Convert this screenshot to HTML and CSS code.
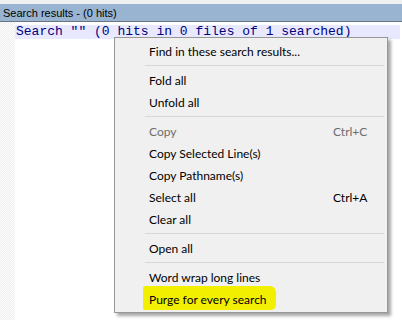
FILE: index.html
```html
<!DOCTYPE html>
<html lang="en">
<head>
    <meta charset="UTF-8">
    <title>Search results</title>
    <link rel="stylesheet" href="styles.css">
</head>
<body>

    <div class="window">
        <!-- Panel caption -->
        <div class="caption-strip"></div>
        <div class="caption">Search results - (0 hits)</div>

        <!-- Results editor -->
        <div class="editor">
            <div class="gutter"></div>
            <div class="content">
                <div class="result-line">Search "" (0 hits in 0 files of 1 searched)</div>
            </div>
        </div>

        <!-- Context menu -->
        <div class="context-menu">
            <div class="item"><span class="label">Find in these search results...</span></div>
            <div class="separator"></div>
            <div class="item"><span class="label">Fold all</span></div>
            <div class="item"><span class="label">Unfold all</span></div>
            <div class="separator"></div>
            <div class="item disabled"><span class="label">Copy</span><span class="shortcut">Ctrl+C</span></div>
            <div class="item"><span class="label">Copy Selected Line(s)</span></div>
            <div class="item"><span class="label">Copy Pathname(s)</span></div>
            <div class="item"><span class="label">Select all</span><span class="shortcut">Ctrl+A</span></div>
            <div class="item"><span class="label">Clear all</span></div>
            <div class="separator"></div>
            <div class="item"><span class="label">Open all</span></div>
            <div class="separator"></div>
            <div class="item"><span class="label">Word wrap long lines</span></div>
            <div class="item marked"><span class="label">Purge for every search</span></div>
        </div>
    </div>

</body>
</html>
```

FILE: styles.css
```css
/* Basic reset */
* {
    margin: 0;
    padding: 0;
    box-sizing: border-box;
}

body {
    width: 402px;
    height: 320px;
    overflow: hidden;
    background-color: #fff;
    font-family: "Segoe UI", Lato, "Liberation Sans", sans-serif;
}

.window {
    position: relative;
    width: 402px;
    height: 320px;
}

/* Caption */
.caption-strip {
    height: 4px;
    background-color: #f0f0f0;
}

.caption {
    height: 18px;
    line-height: 18px;
    padding-left: 3px;
    background-color: #99b4d1;
    color: #000;
    font-family: "Liberation Sans", Arial, sans-serif;
    font-size: 11px;
    border-bottom: 1px solid #6a7580;
}

/* Editor */
.editor {
    display: flex;
    height: 298px;
}

.gutter {
    width: 15px;
    background: repeating-conic-gradient(#ececec 0 25%, #fff 0 50%) 0 0 / 2px 2px;
}

.content {
    flex: 1;
    padding-top: 3px;
    padding-right: 2px;
}

.result-line {
    height: 14px;
    line-height: 14px;
    padding-left: 1px;
    background-color: #e8e8ff;
    color: #000080;
    font-family: "Liberation Mono", "Courier New", monospace;
    font-size: 13px;
    white-space: nowrap;
    overflow: hidden;
}

/* Context menu */
.context-menu {
    position: absolute;
    left: 114px;
    top: 37px;
    width: 274px;
    padding: 2px 0;
    background-color: #f0f0f0;
    border: 1px solid #979797;
    box-shadow: 3px 3px 3px rgba(0, 0, 0, 0.35);
    font-size: 12px;
    color: #000;
}

.item {
    display: flex;
    align-items: center;
    height: 22px;
    padding-left: 34px;
}

.item .label {
    flex: 1;
    position: relative;
}

.item .shortcut {
    width: 54px;
}

.item.disabled {
    color: #6d6d6d;
}

.separator {
    height: 7px;
    margin: 0 3px 0 30px;
    padding-top: 3px;
}

.separator::before {
    content: "";
    display: block;
    border-top: 1px solid #d7d7d7;
}

/* Highlighter stroke over the last entry */
.item.marked {
    position: relative;
}

.item.marked::before {
    content: "";
    position: absolute;
    left: 28px;
    width: 133px;
    top: -2px;
    bottom: 0;
    background-color: #f2f000;
    border-radius: 2px 6px 5px 2px;
}
```
